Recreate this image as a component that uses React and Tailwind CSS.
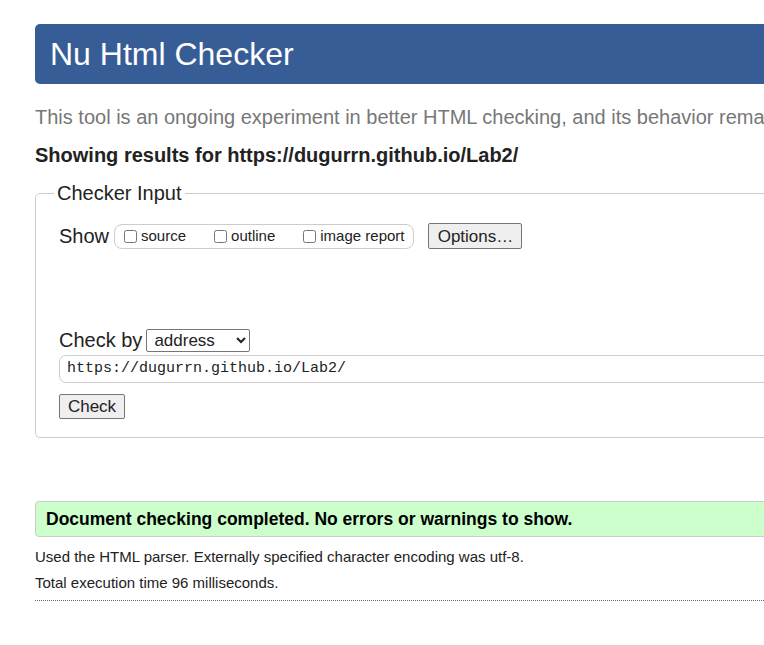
export default function App() {
  return (
    <div className="w-[764px] h-[645px] overflow-hidden bg-white font-['Liberation_Sans',Arial,sans-serif] text-[#222]">
      <div className="w-[1100px] pl-[35px] pt-[24px]">
        <header className="h-[60px] rounded-[5px] bg-[#375d96] pl-[15px] flex items-center">
          <h1 className="text-[32px] leading-none text-white">Nu Html Checker</h1>
        </header>

        <p className="mt-[21px] text-[20px] leading-[24px] text-[#777] whitespace-nowrap">
          This tool is an ongoing experiment in better HTML checking, and its behavior remains subject to change
        </p>
        <p className="mt-[15px] text-[20px] leading-[22px] font-bold whitespace-nowrap">
          Showing results for https://dugurrn.github.io/Lab2/
        </p>

        <fieldset className="mt-[16px] border border-[#ccc] rounded-[5px] pl-[23px] pb-[18px]">
          <legend className="-ml-[5px] px-[3px] text-[20px] leading-[22px]">Checker Input</legend>

          <div className="mt-[19px] flex items-center">
            <span className="text-[20px] leading-[24px]">Show</span>
            <div className="ml-[5px] h-[25px] flex items-center border border-[#ccc] rounded-[8px] pl-[9px] pr-[9px] text-[15px]">
              <label className="flex items-center">
                <input type="checkbox" className="m-0 w-[13px] h-[13px]" />
                <span className="ml-[4px]">source</span>
              </label>
              <label className="flex items-center ml-[28px]">
                <input type="checkbox" className="m-0 w-[13px] h-[13px]" />
                <span className="ml-[4px]">outline</span>
              </label>
              <label className="flex items-center ml-[28px]">
                <input type="checkbox" className="m-0 w-[13px] h-[13px]" />
                <span className="ml-[4px]">image report</span>
              </label>
            </div>
            <button className="ml-[14px] h-[26px] w-[94px] border border-[#767676] rounded-[2px] bg-[#efefef] text-[17px] leading-none">
              Options…
            </button>
          </div>

          <div className="mt-[79px] flex items-center">
            <span className="text-[20px] leading-[24px]">Check by</span>
            <select className="ml-[4px] h-[23px] w-[104px] border border-[#767676] rounded-[2px] text-[17px] pl-[3px] appearance-auto">
              <option>address</option>
            </select>
          </div>

          <div className="mt-[3px] h-[28px] border border-[#ccc] rounded-[7px] pl-[7px] flex items-center font-['Liberation_Mono',monospace] text-[15px]">
            https://dugurrn.github.io/Lab2/
          </div>

          <button className="mt-[11px] h-[25px] w-[66px] border border-[#767676] rounded-[2px] bg-[#efefef] text-[17px] leading-none">
            Check
          </button>
        </fieldset>

        <div className="mt-[63px] h-[36px] border border-[#ccc] rounded-[4px] bg-[#ccffcc] pl-[10px] flex items-center">
          <span className="text-[17.5px] font-bold text-black">Document checking completed. No errors or warnings to show.</span>
        </div>

        <p className="mt-[11px] text-[15px] leading-[18px]">Used the HTML parser. Externally specified character encoding was utf-8.</p>
        <p className="mt-[8px] text-[15px] leading-[18px]">Total execution time 96 milliseconds.</p>
        <div className="mt-[8px] border-t border-dotted border-[#666]" />
      </div>
    </div>
  );
}
